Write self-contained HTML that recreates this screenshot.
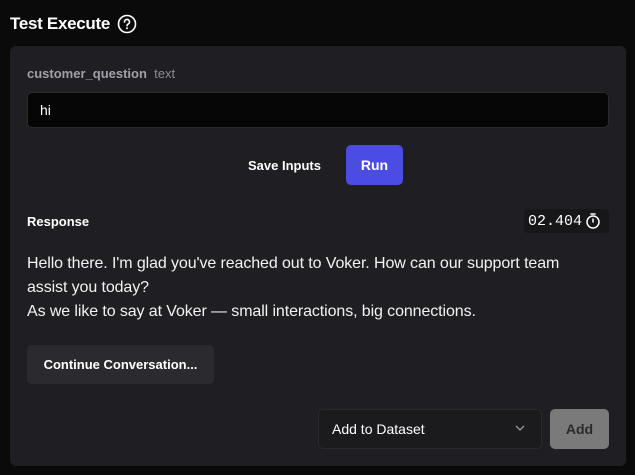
<!DOCTYPE html>
<html><head><style>
*{margin:0;padding:0;box-sizing:border-box}
body{width:635px;height:475px;background:#0a0a0b;font-family:"Liberation Sans",sans-serif;color:#fff;position:relative;overflow:hidden}
.abs{position:absolute}
</style></head><body>
<div class="abs" style="left:10px;top:14px;font-size:17px;font-weight:bold;letter-spacing:-0.3px">Test Execute</div>
<svg class="abs" style="left:117px;top:14px" width="20" height="20" viewBox="0 0 20 20"><circle cx="10" cy="10" r="8.5" fill="none" stroke="#fff" stroke-width="1.6"/><path d="M7.5 8a2.5 2.5 0 1 1 3.3 2.3c-.6.3-.8.7-.8 1.4" fill="none" stroke="#fff" stroke-width="1.6" stroke-linecap="round"/><circle cx="10" cy="14.3" r="1" fill="#fff"/></svg>
<div class="abs" style="left:10px;top:46px;width:616px;height:420px;background:#1f1f23;border-radius:6px"></div>
<div class="abs" style="left:27px;top:66px;font-size:13px;color:#a0a0a8"><b>customer_question</b>&nbsp;&nbsp;<span style="color:#8a8a92">text</span></div>
<div class="abs" style="left:27px;top:92px;width:582px;height:36px;background:#060607;border-radius:5px;border:1px solid #2a2a2e"></div>
<div class="abs" style="left:40px;top:102px;font-size:14px">hi</div>
<div class="abs" style="left:248px;top:158px;font-size:13px;font-weight:bold">Save Inputs</div>
<div class="abs" style="left:346px;top:145px;width:57px;height:40px;background:#4a4ce4;border-radius:5px;font-size:14px;font-weight:bold;text-align:center;line-height:40px">Run</div>
<div class="abs" style="left:27px;top:214px;font-size:13px;font-weight:bold">Response</div>
<div class="abs" style="left:524px;top:209px;width:85px;height:24px;background:#17171a;border-radius:4px"></div>
<div class="abs" style="left:528px;top:213px;font-family:'Liberation Mono',monospace;font-size:15px">02.404</div>
<svg class="abs" style="left:585px;top:212px" width="16" height="18" viewBox="0 0 16 18"><circle cx="8" cy="10" r="6" fill="none" stroke="#fff" stroke-width="1.5"/><path d="M6 2h4M8 10V7" stroke="#fff" stroke-width="1.5" stroke-linecap="round"/></svg>
<div class="abs" style="left:27px;top:252px;font-size:16px;line-height:24px;color:#f2f2f2;letter-spacing:-0.1px">Hello there. I'm glad you've reached out to Voker. How can our support team<br>assist you today?<br>As we like to say at Voker — small interactions, big connections.</div>
<div class="abs" style="left:27px;top:345px;width:187px;height:39px;background:#2b2b2f;border-radius:5px;font-size:13px;font-weight:bold;text-align:center;line-height:39px">Continue Conversation...</div>
<div class="abs" style="left:318px;top:409px;width:224px;height:40px;background:#1b1b1e;border:1px solid #2a2a2e;border-radius:5px"></div>
<div class="abs" style="left:332px;top:421px;font-size:14px">Add to Dataset</div>
<svg class="abs" style="left:514px;top:424px" width="12" height="8" viewBox="0 0 12 8"><path d="M2 2l4 4 4-4" fill="none" stroke="#999" stroke-width="1.3"/></svg>
<div class="abs" style="left:550px;top:409px;width:59px;height:40px;background:#7a7a7b;border-radius:5px;font-size:14px;font-weight:bold;color:#2a2a2a;text-align:center;line-height:40px">Add</div>
</body></html>
